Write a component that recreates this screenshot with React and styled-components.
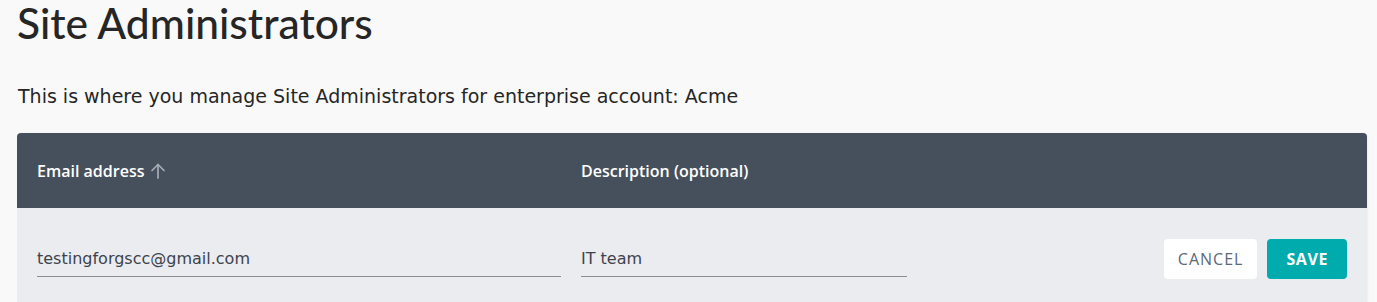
import React from 'react';
import styled, { createGlobalStyle } from 'styled-components';

const GlobalStyle = createGlobalStyle`
  html, body {
    margin: 0;
    padding: 0;
    background: #f9f9f9;
    font-family: 'DejaVu Sans', 'Open Sans', sans-serif;
    color: #262626;
  }
`;

const Page = styled.div`
  padding: 0 10px 0 17px;
`;

const Title = styled.h1`
  margin: 0;
  font-family: Lato, 'Open Sans', sans-serif;
  font-size: 42.5px;
  line-height: 46px;
  font-weight: 500;
  color: #262626;
`;

const Intro = styled.p`
  margin: 36px 0 0 1px;
  font-size: 19px;
  line-height: 28px;
  color: #262626;
`;

const Table = styled.div`
  margin-top: 23px;
  border-radius: 4px 4px 0 0;
  overflow: hidden;
  box-shadow: 1px 0 2px rgba(0, 0, 0, 0.05);
`;

const HeaderRow = styled.div`
  display: grid;
  grid-template-columns: 544px 1fr;
  align-items: center;
  height: 75px;
  padding: 0 20px;
  background: #46505c;
  color: #ffffff;
  font-family: 'Open Sans', sans-serif;
  font-size: 16px;
  font-weight: 600;
`;

const HeaderCell = styled.div`
  display: flex;
  align-items: center;
  gap: 5px;
`;

const BodyRow = styled.div`
  display: grid;
  grid-template-columns: 544px 326px 1fr;
  align-items: center;
  height: 94px;
  padding: 0 20px;
  background: #ebecf0;
`;

const Field = styled.div`
  width: ${p => p.width}px;
  border-bottom: 1px solid #8b8c90;
  padding: 0 0 6px;
  margin-top: 14px;
  font-size: 16px;
  line-height: 22px;
  color: #3d434c;
`;

const Actions = styled.div`
  display: flex;
  justify-content: flex-end;
  gap: 10px;
  margin-top: 8px;
`;

const Button = styled.button`
  height: 40px;
  padding: 0 ${p => (p.primary ? 19 : 14)}px;
  border: none;
  border-radius: 4px;
  background: ${p => (p.primary ? '#00abad' : '#ffffff')};
  color: ${p => (p.primary ? '#ffffff' : '#5d6878')};
  font-family: 'Open Sans', sans-serif;
  font-size: 16px;
  font-weight: ${p => (p.primary ? 700 : 400)};
  letter-spacing: ${p => (p.primary ? 0.6 : 1)}px;
  cursor: pointer;
`;

const ArrowUp = () => (
  <svg width="18" height="18" viewBox="0 0 18 18" fill="none" stroke="#a7adb5" strokeWidth="1.7" strokeLinecap="round" strokeLinejoin="round">
    <path d="M9 16V2.5" />
    <path d="M3 8.5L9 2.5L15 8.5" />
  </svg>
);

export default function App() {
  return (
    <>
      <GlobalStyle />
      <Page>
        <Title>Site Administrators</Title>
        <Intro>This is where you manage Site Administrators for enterprise account: Acme</Intro>
        <Table>
          <HeaderRow>
            <HeaderCell>
              Email address <ArrowUp />
            </HeaderCell>
            <HeaderCell>Description (optional)</HeaderCell>
          </HeaderRow>
          <BodyRow>
            <Field width={524}>testingforgscc@gmail.com</Field>
            <Field width={326}>IT team</Field>
            <Actions>
              <Button>CANCEL</Button>
              <Button primary>SAVE</Button>
            </Actions>
          </BodyRow>
        </Table>
      </Page>
    </>
  );
}
